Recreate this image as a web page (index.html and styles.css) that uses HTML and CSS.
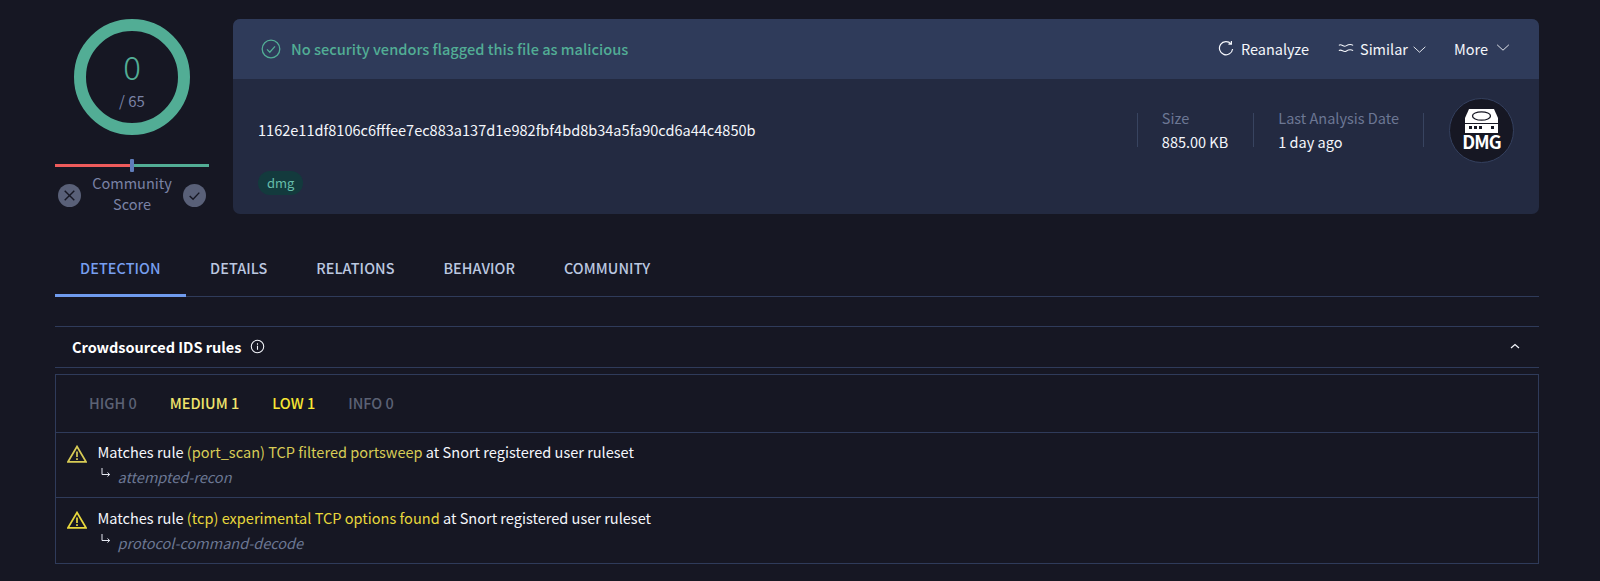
FILE: index.html
```html
<!DOCTYPE html>
<html lang="en">
<head>
<meta charset="utf-8">
<title>File report</title>
<link rel="stylesheet" href="styles.css">
</head>
<body>
<main class="page">
  <section class="top">
    <aside class="score">
      <div class="ring">
        <span class="ring-num">0</span>
        <span class="ring-total">/ 65</span>
      </div>
      <div class="meter"><span class="meter-knob"></span></div>
      <div class="vote">
        <span class="vote-btn">
          <svg viewBox="0 0 24 24" class="vote-ico"><path d="M7 7l10 10M17 7L7 17"/></svg>
        </span>
        <span class="vote-label">Community<br>Score</span>
        <span class="vote-btn">
          <svg viewBox="0 0 24 24" class="vote-ico"><path d="M7 12.500l3.500 3.500L17 9"/></svg>
        </span>
      </div>
    </aside>
    <div class="card">
      <header class="card-head">
        <svg viewBox="0 0 20 20" class="ok-ico"><circle cx="10" cy="10" r="8.800"/><path d="M6 10.400l2.800 2.800L14 7.400"/></svg>
        <span class="verdict">No security vendors flagged this file as malicious</span>
        <nav class="actions">
          <span class="action action-re">
            <svg viewBox="0 0 16 16" class="act-ico"><path d="M13 3.800A6.600 6.600 0 1 0 14.600 9M13.400 1v3.200h-3"/></svg>
            Reanalyze
          </span>
          <span class="action action-sim">
            <svg viewBox="0 0 18 12" class="wave-ico"><path d="M1 3c3-2.400 5 2.400 8 .6s5-2.600 8-.6M1 9c3-2.400 5 2.400 8 .6s5-2.600 8-.6"/></svg>
            Similar
            <svg viewBox="0 0 16 10" class="chev-ico"><path d="M1.500 2l6.500 6 6.500-6"/></svg>
          </span>
          <span class="action action-more">
            More
            <svg viewBox="0 0 16 10" class="chev-ico chev-up"><path d="M1.500 2l6.500 6 6.500-6"/></svg>
          </span>
        </nav>
      </header>
      <div class="card-body">
        <div class="file-main">
          <div class="hash">1162e11df8106c6fffee7ec883a137d1e982fbf4bd8b34a5fa90cd6a44c4850b</div>
          <span class="tag">dmg</span>
        </div>
        <div class="stat stat-size">
          <span class="stat-label">Size</span>
          <span class="stat-value">885.00 KB</span>
        </div>
        <div class="stat">
          <span class="stat-label">Last Analysis Date</span>
          <span class="stat-value">1 day ago</span>
        </div>
        <div class="stat-end"></div>
        <div class="file-type">
          <svg viewBox="0 0 33 24" class="disk">
            <path class="disk-body" d="M4 0h25l4 9v15H0V9z"/>
            <ellipse class="disk-hole" cx="16.500" cy="7" rx="9" ry="4.200"/>
            <rect class="disk-dot" x="0" y="14" width="33" height="1"/>
            <rect class="disk-dot" x="4" y="17" width="3" height="3"/>
            <rect class="disk-dot" x="9" y="17" width="3" height="3"/>
            <rect class="disk-dot" x="14" y="17" width="3" height="3"/>
            <rect class="disk-dot" x="26" y="17" width="3" height="3"/>
          </svg>
          <span class="dmg">DMG</span>
        </div>
      </div>
    </div>
  </section>

  <nav class="tabs">
    <span class="tab tab-active">DETECTION</span>
    <span class="tab">DETAILS</span>
    <span class="tab">RELATIONS</span>
    <span class="tab">BEHAVIOR</span>
    <span class="tab">COMMUNITY</span>
  </nav>

  <section class="rules">
    <header class="rules-head">
      <h2 class="rules-title">Crowdsourced IDS rules</h2>
      <svg viewBox="0 0 14 14" class="info-ico"><circle cx="7" cy="7" r="5.800"/><path d="M7 6.300v3.700M7 4v1.300"/></svg>
      <svg viewBox="0 0 10 6" class="collapse-ico"><path d="M1 5l4-3.500L9 5"/></svg>
    </header>
    <div class="rules-box">
      <div class="levels">
        <span class="level">HIGH 0</span>
        <span class="level level-med">MEDIUM 1</span>
        <span class="level level-low">LOW 1</span>
        <span class="level">INFO 0</span>
      </div>
      <div class="rule">
        <svg viewBox="0 0 20 18" class="warn-ico warn-dim"><path d="M10 1.500L19 16.800H1z"/><path d="M10 6.500v5.500M10 13.300v1.600"/></svg>
        <div class="rule-text">
          <p class="rule-line">Matches rule <span class="hit-dim">(port_scan) TCP filtered portsweep</span> at Snort registered user ruleset</p>
          <p class="rule-sub"><svg viewBox="0 0 10 9" class="arrow"><path d="M1 0v6.500h7.500M6.500 4.500l2.200 2-2.200 2"/></svg><em>attempted-recon</em></p>
        </div>
      </div>
      <div class="rule">
        <svg viewBox="0 0 20 18" class="warn-ico"><path d="M10 1.500L19 16.800H1z"/><path d="M10 6.500v5.500M10 13.300v1.600"/></svg>
        <div class="rule-text">
          <p class="rule-line">Matches rule <span class="hit">(tcp) experimental TCP options found</span> at Snort registered user ruleset</p>
          <p class="rule-sub"><svg viewBox="0 0 10 9" class="arrow"><path d="M1 0v6.500h7.500M6.500 4.500l2.200 2-2.200 2"/></svg><em>protocol-command-decode</em></p>
        </div>
      </div>
    </div>
  </section>
</main>
</body>
</html>
```
FILE: styles.css
```css
* { box-sizing: border-box; }
html, body { margin: 0; height: 100%; }
body {
  background: #161723;
  color: #f4f6fb;
  font-family: "Noto Sans CJK SC", "Noto Sans", sans-serif;
  font-size: 14px;
  overflow: hidden;
}
.page { padding: 19px 61px 0 55px; }
svg { display: block; fill: none; stroke: currentColor; }

.top { display: flex; gap: 24px; height: 195px; }
.score { width: 154px; display: flex; flex-direction: column; align-items: center; }
.ring {
  width: 116px; height: 116px; border-radius: 50%;
  border: 12px solid #52ad95;
  display: flex; flex-direction: column; align-items: center;
  padding-top: 15px;
}
.ring-num { font-size: 33px; line-height: 40px; color: #52ad95; font-weight: 300; }
.ring-total { font-size: 15px; line-height: 20px; margin-top: 5px; color: #7a82a5; }
.meter {
  width: 154px; height: 3px; margin-top: 29px; position: relative;
  background: linear-gradient(90deg, #ee5b5b 50%, #52ad95 50%);
}
.meter-knob {
  position: absolute; left: 75px; top: -5px; width: 4px; height: 13px;
  border-radius: 1px; background: #5f7cba;
}
.vote { width: 148px; display: flex; align-items: center; justify-content: space-between; margin-top: 6px; }
.vote-label { font-size: 14.500px; line-height: 20.500px; color: #7a82a5; text-align: center; }
.vote-btn {
  width: 23px; height: 23px; border-radius: 50%; margin-top: 4px;
  background: #596078; color: #161723;
}
.vote-ico { width: 23px; height: 23px; stroke-width: 1.500; }

.card {
  flex: 1; border-radius: 7px; overflow: hidden;
  background: #232a41; display: flex; flex-direction: column;
}
.card-head {
  height: 60px; background: #2f3b5a; padding: 0 28px;
  display: flex; align-items: center;
}
.ok-ico { width: 20px; height: 20px; color: #52ad95; stroke-width: 1.300; margin-right: 10px; }
.verdict { font-size: 14.600px; font-weight: 500; color: #52ad95; margin-top: -2px; }
.actions { margin-left: auto; margin-top: -2px; display: flex; align-items: center; gap: 27px; }
.action { display: flex; align-items: center; font-size: 14.500px; color: #f4f6fb; }
.act-ico { width: 16px; height: 16px; margin-right: 7px; stroke-width: 1.200; }
.action-re { margin-right: 2px; }
.wave-ico { width: 16px; height: 12px; margin-right: 6px; stroke-width: 1.200; }
.chev-ico { width: 15px; height: 9px; margin-left: 4px; margin-top: 3px; stroke-width: 1; }
.chev-up { width: 16px; margin-top: -2px; margin-left: 7px; }

.card-body { flex: 1; display: flex; align-items: flex-start; padding: 19px 25px 0 25px; }
.file-main { flex: 1; display: flex; flex-direction: column; align-items: flex-start; padding-top: 22px; }
.hash { font-size: 14.550px; line-height: 20px; }
.tag {
  margin-top: 31px; height: 24px; padding: 0 9px; border-radius: 12px;
  background: #133a3d; color: #66bcaa; font-size: 13px; line-height: 23px;
}
.stat {
  height: 34px; margin-top: 15px; padding: 0 24px;
  border-left: 1px solid #384460;
  display: flex; flex-direction: column; justify-content: center;
}
.stat-size { padding-right: 25px; }
.stat-label { color: #6c7794; font-size: 14.500px; line-height: 24px; }
.stat-value { color: #f4f6fb; font-size: 14.500px; line-height: 24px; }
.stat-end { width: 1px; height: 34px; margin-top: 15px; background: #384460; }
.file-type {
  width: 65px; height: 65px; margin-left: 25px; border-radius: 50%;
  background: #161723; border: 1px solid #34405e;
  display: flex; flex-direction: column; align-items: center; padding-top: 10px;
}
.disk { width: 33px; height: 24px; stroke: none; flex: none; }
.disk-body { fill: #fff; }
.disk-hole { fill: #fff; stroke: #161723; stroke-width: 1.300; }
.disk-dot { fill: #161723; }
.dmg { font-size: 18px; line-height: 15px; font-weight: 700; color: #fff; margin-top: 1px; letter-spacing: -.8px; }

.tabs { display: flex; margin-top: 30px; height: 53px; border-bottom: 1px solid #2f3b5a; }
.tab {
  padding: 0 24.400px; height: 53px; line-height: 48px;
  font-size: 14.400px; font-weight: 500; color: #bcc8e0; letter-spacing: .1px;
}
.tab-active { padding: 0 25px; color: #779fef; border-bottom: 3px solid #6f9bee; }

.rules { margin-top: 29px; }
.rules-head {
  height: 42px; display: flex; align-items: center; padding: 0 17px;
  border-top: 1px solid #2f3b5a; border-bottom: 1px solid #2f3b5a;
}
.rules-title { margin: -2px 0 0; font-size: 14.500px; font-weight: 700; color: #fff; }
.info-ico { width: 15px; height: 15px; margin: -2px 0 0 9px; stroke-width: 1; }
.collapse-ico { width: 10px; height: 6px; margin: -2px 2px 0 auto; stroke-width: 1.200; }
.rules-box { margin-top: 6px; border: 1px solid #2f3b5a; }
.levels { height: 57px; display: flex; align-items: center; gap: 33px; padding: 0 33px 2px; }
.level { font-size: 14.500px; font-weight: 500; color: #5c6275; }
.level-med { color: #f0e46c; }
.level-low { color: #f8e833; }
.rule {
  height: 65px; border-top: 1px solid #2f3b5a;
  display: flex; align-items: flex-start; padding: 7px 11px;
}
.rule:last-child { height: 66px; padding-top: 8px; }
.warn-ico { width: 20px; height: 18px; margin-top: 5px; margin-right: 10.500px; color: #e8d83c; stroke-width: 1.700; flex: none; }
.warn-dim { color: #d8cc56; }
.rule-text { display: flex; flex-direction: column; }
.rule-line { margin: 0; font-size: 14.550px; line-height: 24px; color: #f4f6fb; }
.hit { color: #e8d83c; }
.hit-dim { color: #d8cc56; }
.rule-sub { margin: 1px 0 0; display: flex; font-size: 14.500px; line-height: 24px; color: #6c7794; }
.arrow { width: 10px; height: 9px; margin: 3px 7px 0 3px; color: #e4e7f0; stroke-width: 1; flex: none; }
```
